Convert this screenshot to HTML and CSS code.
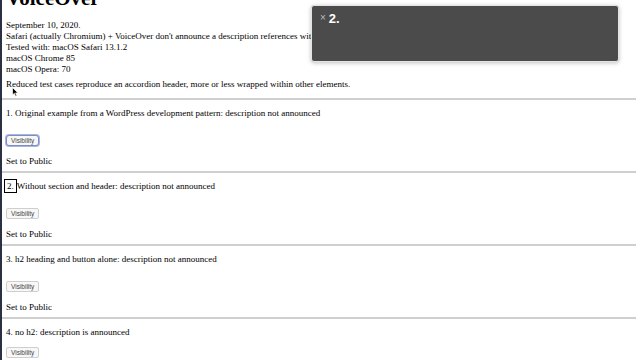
FILE: index.html
```html
<!DOCTYPE html>
<html lang="en">
<head>
    <meta charset="UTF-8">
    <title>VoiceOver</title>
    <link rel="stylesheet" href="styles.css">
</head>
<body>
    <div class="page">
        <header class="intro">
            <h1 class="page-title">VoiceOver</h1>
            <p class="notes">
                September 10, 2020.<br>
                Safari (actually Chromium) + VoiceOver don't announce a description references with aria-describedby<br>
                Tested with: macOS Safari 13.1.2<br>
                macOS Chrome 85<br>
                macOS Opera: 70
            </p>
            <p class="lead">Reduced test cases reproduce an accordion header, more or less wrapped within other elements.</p>
        </header>

        <section class="case">
            <h2 class="case-title">1. Original example from a WordPress development pattern: description not announced</h2>
            <button class="visibility-btn is-focused">Visibility</button>
            <p class="case-desc">Set to Public</p>
        </section>

        <section class="case">
            <h2 class="case-title"><span class="vo-cursor">2.</span> Without section and header: description not announced</h2>
            <button class="visibility-btn">Visibility</button>
            <p class="case-desc">Set to Public</p>
        </section>

        <section class="case">
            <h2 class="case-title">3. h2 heading and button alone: description not announced</h2>
            <button class="visibility-btn">Visibility</button>
            <p class="case-desc">Set to Public</p>
        </section>

        <section class="case case-plain">
            <p class="case-title">4. no h2: description is announced</p>
            <button class="visibility-btn">Visibility</button>
            <p class="case-desc">Set to Public</p>
        </section>

        <!-- VoiceOver caption panel -->
        <div class="vo-panel">
            <span class="vo-close">&times;</span>
            <span class="vo-text">2.</span>
        </div>

        <!-- mouse pointer -->
        <svg class="pointer" width="7" height="10" viewBox="0 0 7 10">
            <path d="M0.5 0.5 L0.5 8 L2.3 6.3 L3.6 9.3 L4.8 8.8 L3.6 5.9 L6 5.9 Z" fill="#000" stroke="#fff" stroke-width="0.7"/>
        </svg>
    </div>
</body>
</html>
```

FILE: styles.css
```css
html {
    background: #fff;
}

body {
    margin: 0;
    padding: 0;
    font-family: "Liberation Serif", "Times New Roman", serif;
    font-size: 9px;
    line-height: 11px;
    color: #000;
    overflow: hidden;
}

.page {
    display: flow-root;
    position: relative;
    min-height: 380px;
    margin-right: 4px;
    border-left: 2px solid #2b3142;
}

.intro {
    padding-left: 4px;
}

.page-title {
    font-size: 21px;
    line-height: 24px;
    font-weight: bold;
    margin: -14px 0 10px;
}

.notes {
    margin: 0;
}

.lead {
    margin: 4px 0 0;
    padding-bottom: 8px;
}

.case {
    border-top: 2px solid #cfcfcf;
    padding: 8px 0 4px 4px;
}

.case-title {
    font-size: 9px;
    line-height: 11px;
    font-weight: normal;
    margin: 0 0 16px;
}

.case-plain .case-title {
    margin-bottom: 9px;
}

.case-desc {
    margin: 10px 0 0;
}

.case-plain .case-desc {
    margin-top: 0;
}

.visibility-btn {
    display: block;
    height: 11px;
    padding: 0 4px;
    font-family: "Liberation Sans", Arial, sans-serif;
    font-size: 6.5px;
    line-height: 9px;
    color: #444;
    background: #f7f7f7;
    border: 1px solid #cfcfcf;
    border-radius: 2px;
}

.visibility-btn.is-focused {
    border: 1px solid #7d8cc4;
    box-shadow: 0 0 0 1px #aab5df;
    border-radius: 3px;
}

.vo-cursor {
    outline: 1px solid #000;
    outline-offset: 1px;
    padding: 0 1px;
}

.vo-panel {
    position: absolute;
    left: 309px;
    top: 5px;
    width: 308px;
    height: 57px;
    background: #4b4b4b;
    border: 1px solid #e4e4e4;
    border-radius: 3px;
    box-shadow: 0 1px 4px rgba(0, 0, 0, 0.25);
    display: flex;
    align-items: flex-start;
    gap: 3px;
    padding: 6px 8px;
    box-sizing: border-box;
    font-family: "Liberation Sans", Arial, sans-serif;
}

.vo-close {
    color: #bdbdbd;
    font-size: 10px;
    line-height: 12px;
}

.vo-text {
    color: #fff;
    font-size: 13px;
    font-weight: bold;
    line-height: 14px;
}

.pointer {
    position: absolute;
    left: 10px;
    top: 87px;
}
```
